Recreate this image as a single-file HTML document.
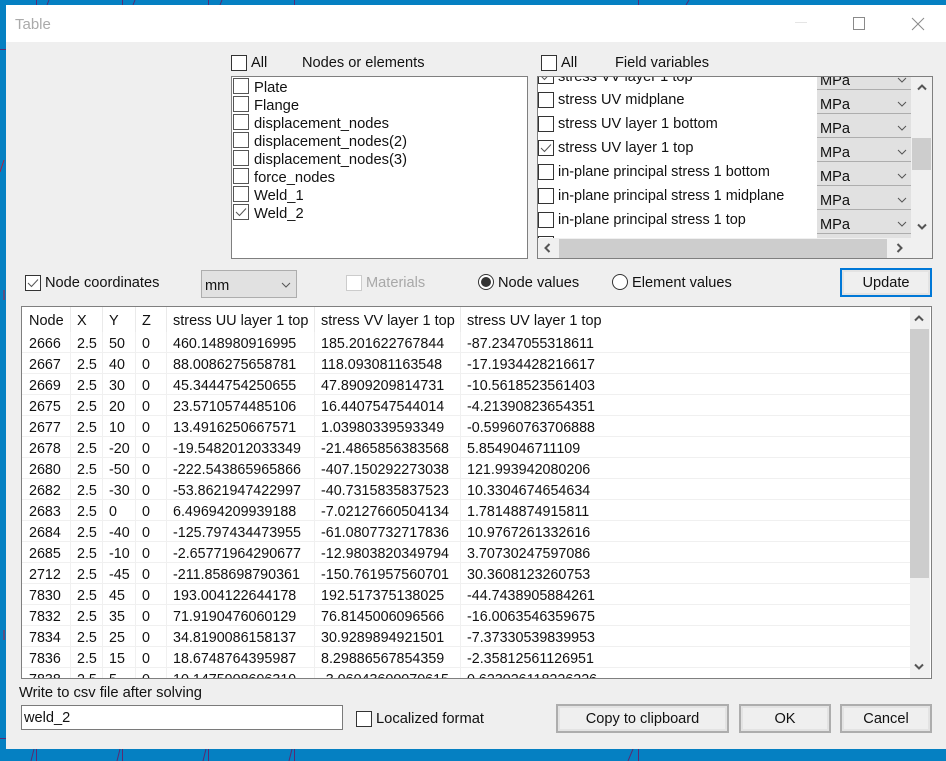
<!DOCTYPE html>
<html><head><meta charset="utf-8"><title>Table</title>
<style>
html,body{margin:0;padding:0;width:946px;height:761px;overflow:hidden;background:#0580c2;}
*{box-sizing:border-box;}
body{font-family:"Liberation Sans",Arial,sans-serif;font-size:14.6px;color:#111;position:relative;}
.a{position:absolute;}
.t{position:absolute;white-space:nowrap;line-height:18px;height:18px;margin-top:1px;}
.n{font-size:14.45px;}
.w{font-size:14.72px;}
.c{position:absolute;width:16px;height:16px;border:1px solid #333;background:#fff;}
.c svg{position:absolute;left:1px;top:1px;}
.box{position:absolute;background:#fff;border:1px solid #7f7f7f;overflow:hidden;}
.combo{position:absolute;left:279px;width:94px;height:24px;background:#e1e1e1;border-top:1px solid #adadad;}
.combo span{position:absolute;left:3px;top:6px;line-height:18px;}
.combo svg{position:absolute;left:80px;top:11px;}
.btn{position:absolute;height:29px;background:#efefef;border:2px solid #adadad;box-shadow:inset 0 0 0 2px #e3e3e3;text-align:center;line-height:26px;}
table{position:absolute;left:0;top:0;border-collapse:separate;border-spacing:0;table-layout:fixed;width:888px;font-size:14.3px;}
td,th{font-weight:normal;text-align:left;padding:5px 0 0 6px;white-space:nowrap;overflow:hidden;height:21px;line-height:15px;border-bottom:1px solid #f0f0f0;border-right:1px solid #f0f0f0;}
td:first-child,th:first-child{padding-left:7px;}
th{height:25px;line-height:21px;padding-top:4px;border-bottom:0;border-right:1px solid #eaeaea;font-size:14.5px;}
td:last-child,th:last-child{border-right:0;}
</style></head><body>
<svg class="a" style="left:0;top:0" width="946" height="761">
<g stroke="#5a2a72" stroke-width="1" fill="none">
<path d="M36.5 0V5M47 5L49 0M122.5 0V5M133 5L135 0M208.5 0V5M220 5L222 0M294.5 0V5M638.5 0V5M686 5L689 0"/>
<path d="M36.5 749V761M31 761L34 749M122.5 749V761M117 761L120 749M208.5 749V761M203 761L206 749M294.5 749V761M289 761L292 749M638.5 749V761M628 761L633 749"/>
<path d="M0 49.5H6M0 738.5H6"/>
</g>
<path d="M4 290V300M4 630V640M0 172L4 160" stroke="#b02040" fill="none"/>
</svg>

<div class="a" style="left:6px;top:5px;width:940px;height:744px;background:#efefef;"></div>
<div class="a" style="left:6px;top:5px;width:940px;height:37px;background:#fff;"></div>
<div class="t" style="left:15px;top:15px;color:#aaa;font-size:15px;">Table</div>
<div class="a" style="left:795px;top:22px;width:12px;height:1px;background:#e5e5e5;"></div>
<div class="a" style="left:853px;top:17px;width:12px;height:13px;border:1px solid #8a8a8a;"></div>
<svg class="a" style="left:911px;top:17px" width="14" height="14"><path d="M1 1L13 13M13 1L1 13" stroke="#8a8a8a" stroke-width="1" fill="none"/></svg>

<div class="c" style="left:231px;top:55px;"></div><div class="t" style="left:251px;top:53px;">All</div>
<div class="t" style="left:302px;top:53px;">Nodes or elements</div>
<div class="c" style="left:541px;top:55px;"></div><div class="t" style="left:561px;top:53px;">All</div>
<div class="t" style="left:615px;top:53px;">Field variables</div>

<!-- left list -->
<div class="box w" style="left:231px;top:76px;width:297px;height:183px;">
<div class="c" style="left:1px;top:1px;border-color:#555"></div><div class="t" style="left:22px;top:1px;">Plate</div>
<div class="c" style="left:1px;top:19px;border-color:#555"></div><div class="t" style="left:22px;top:19px;">Flange</div>
<div class="c" style="left:1px;top:37px;border-color:#555"></div><div class="t" style="left:22px;top:37px;">displacement_nodes</div>
<div class="c" style="left:1px;top:55px;border-color:#555"></div><div class="t" style="left:22px;top:55px;">displacement_nodes(2)</div>
<div class="c" style="left:1px;top:73px;border-color:#555"></div><div class="t" style="left:22px;top:73px;">displacement_nodes(3)</div>
<div class="c" style="left:1px;top:91px;border-color:#555"></div><div class="t" style="left:22px;top:91px;">force_nodes</div>
<div class="c" style="left:1px;top:109px;border-color:#555"></div><div class="t" style="left:22px;top:109px;">Weld_1</div>
<div class="c" style="left:1px;top:127px;border-color:#555"><svg width="12" height="12"><path d="M1 6L4.5 9.5L11 2.5" stroke="#555" fill="none"/></svg></div><div class="t" style="left:22px;top:127px;">Weld_2</div>
</div>

<!-- right list -->
<div class="box" style="left:537px;top:76px;width:396px;height:183px;">
<div class="c" style="left:0;top:-9px;"><svg width="12" height="12"><path d="M1 6L4.5 9.5L11 2.5" stroke="#555" fill="none"/></svg></div><div class="t" style="left:20px;top:-10px;">stress VV layer 1 top</div>
<div class="c" style="left:0;top:15px;"></div><div class="t" style="left:20px;top:13px;">stress UV midplane</div>
<div class="c" style="left:0;top:39px;"></div><div class="t" style="left:20px;top:37px;">stress UV layer 1 bottom</div>
<div class="c" style="left:0;top:63px;"><svg width="12" height="12"><path d="M1 6L4.5 9.5L11 2.5" stroke="#555" fill="none"/></svg></div><div class="t" style="left:20px;top:61px;">stress UV layer 1 top</div>
<div class="c" style="left:0;top:87px;"></div><div class="t n" style="left:20px;top:85px;">in-plane principal stress 1 bottom</div>
<div class="c" style="left:0;top:111px;"></div><div class="t n" style="left:20px;top:109px;">in-plane principal stress 1 midplane</div>
<div class="c" style="left:0;top:135px;"></div><div class="t n" style="left:20px;top:133px;">in-plane principal stress 1 top</div>
<div class="c" style="left:0;top:159px;"></div>
<div class="combo" style="top:-12px;"><span>MPa</span><svg width="10" height="6"><path d="M1 1L5 5L9 1" stroke="#555" fill="none"/></svg></div>
<div class="combo" style="top:12px;"><span>MPa</span><svg width="10" height="6"><path d="M1 1L5 5L9 1" stroke="#555" fill="none"/></svg></div>
<div class="combo" style="top:36px;"><span>MPa</span><svg width="10" height="6"><path d="M1 1L5 5L9 1" stroke="#555" fill="none"/></svg></div>
<div class="combo" style="top:60px;"><span>MPa</span><svg width="10" height="6"><path d="M1 1L5 5L9 1" stroke="#555" fill="none"/></svg></div>
<div class="combo" style="top:84px;"><span>MPa</span><svg width="10" height="6"><path d="M1 1L5 5L9 1" stroke="#555" fill="none"/></svg></div>
<div class="combo" style="top:108px;"><span>MPa</span><svg width="10" height="6"><path d="M1 1L5 5L9 1" stroke="#555" fill="none"/></svg></div>
<div class="combo" style="top:132px;"><span>MPa</span><svg width="10" height="6"><path d="M1 1L5 5L9 1" stroke="#555" fill="none"/></svg></div>
<div class="combo" style="top:156px;"></div>
<!-- v scrollbar -->
<div class="a" style="left:373px;top:0;width:21px;height:161px;background:#f0f0f0;"></div>
<div class="a" style="left:374px;top:61px;width:19px;height:32px;background:#cdcdcd;"></div>
<svg class="a" style="left:379px;top:7px" width="10" height="7"><path d="M1 5.5L5 1.5L9 5.5" stroke="#555" stroke-width="2" fill="none"/></svg>
<svg class="a" style="left:379px;top:146px" width="10" height="7"><path d="M1 1.5L5 5.5L9 1.5" stroke="#555" stroke-width="2" fill="none"/></svg>
<!-- h scrollbar -->
<div class="a" style="left:0;top:161px;width:394px;height:20px;background:#f0f0f0;"></div>
<div class="a" style="left:21px;top:162px;width:328px;height:19px;background:#cdcdcd;"></div>
<svg class="a" style="left:6px;top:166px" width="7" height="10"><path d="M5.5 1L1.5 5L5.5 9" stroke="#555" stroke-width="2" fill="none"/></svg>
<svg class="a" style="left:358px;top:166px" width="7" height="10"><path d="M1.5 1L5.5 5L1.5 9" stroke="#555" stroke-width="2" fill="none"/></svg>
</div>

<!-- options row -->
<div class="c" style="left:25px;top:275px;"><svg width="12" height="12"><path d="M1 6L4.5 9.5L11 2.5" stroke="#555" fill="none"/></svg></div>
<div class="t" style="left:45px;top:273px;">Node coordinates</div>
<div class="a" style="left:201px;top:270px;width:96px;height:28px;background:#e1e1e1;border:1px solid #adadad;"></div>
<div class="t" style="left:205px;top:276px;">mm</div>
<svg class="a" style="left:281px;top:282px" width="10" height="6"><path d="M1 1L5 5L9 1" stroke="#555" fill="none"/></svg>
<div class="c" style="left:346px;top:275px;border-color:#ccc;"></div>
<div class="t" style="left:366px;top:273px;color:#a8a8a8;">Materials</div>
<svg class="a" style="left:478px;top:274px" width="16" height="16"><circle cx="8" cy="8" r="7.5" fill="#fff" stroke="#333"/><circle cx="8" cy="8" r="5" fill="#333"/></svg>
<div class="t" style="left:498px;top:273px;">Node values</div>
<svg class="a" style="left:612px;top:274px" width="16" height="16"><circle cx="8" cy="8" r="7.5" fill="#fff" stroke="#333"/></svg>
<div class="t" style="left:632px;top:273px;">Element values</div>
<div class="btn" style="left:840px;top:268px;width:92px;border-color:#0078d7;">Update</div>

<!-- table -->
<div class="box" style="left:21px;top:306px;width:911px;height:373px;">
<table><colgroup><col style="width:49px"><col style="width:32px"><col style="width:33px"><col style="width:31px"><col style="width:148px"><col style="width:146px"><col></colgroup>
<tr><th>Node</th><th>X</th><th>Y</th><th>Z</th><th>stress UU layer 1 top</th><th>stress VV layer 1 top</th><th>stress UV layer 1 top</th></tr>
<tr><td>2666</td><td>2.5</td><td>50</td><td>0</td><td>460.148980916995</td><td>185.201622767844</td><td>-87.2347055318611</td></tr>
<tr><td>2667</td><td>2.5</td><td>40</td><td>0</td><td>88.0086275658781</td><td>118.093081163548</td><td>-17.1934428216617</td></tr>
<tr><td>2669</td><td>2.5</td><td>30</td><td>0</td><td>45.3444754250655</td><td>47.8909209814731</td><td>-10.5618523561403</td></tr>
<tr><td>2675</td><td>2.5</td><td>20</td><td>0</td><td>23.5710574485106</td><td>16.4407547544014</td><td>-4.21390823654351</td></tr>
<tr><td>2677</td><td>2.5</td><td>10</td><td>0</td><td>13.4916250667571</td><td>1.03980339593349</td><td>-0.59960763706888</td></tr>
<tr><td>2678</td><td>2.5</td><td>-20</td><td>0</td><td>-19.5482012033349</td><td>-21.4865856383568</td><td>5.8549046711109</td></tr>
<tr><td>2680</td><td>2.5</td><td>-50</td><td>0</td><td>-222.543865965866</td><td>-407.150292273038</td><td>121.993942080206</td></tr>
<tr><td>2682</td><td>2.5</td><td>-30</td><td>0</td><td>-53.8621947422997</td><td>-40.7315835837523</td><td>10.3304674654634</td></tr>
<tr><td>2683</td><td>2.5</td><td>0</td><td>0</td><td>6.49694209939188</td><td>-7.02127660504134</td><td>1.78148874915811</td></tr>
<tr><td>2684</td><td>2.5</td><td>-40</td><td>0</td><td>-125.797434473955</td><td>-61.0807732717836</td><td>10.9767261332616</td></tr>
<tr><td>2685</td><td>2.5</td><td>-10</td><td>0</td><td>-2.65771964290677</td><td>-12.9803820349794</td><td>3.70730247597086</td></tr>
<tr><td>2712</td><td>2.5</td><td>-45</td><td>0</td><td>-211.858698790361</td><td>-150.761957560701</td><td>30.3608123260753</td></tr>
<tr><td>7830</td><td>2.5</td><td>45</td><td>0</td><td>193.004122644178</td><td>192.517375138025</td><td>-44.7438905884261</td></tr>
<tr><td>7832</td><td>2.5</td><td>35</td><td>0</td><td>71.9190476060129</td><td>76.8145006096566</td><td>-16.0063546359675</td></tr>
<tr><td>7834</td><td>2.5</td><td>25</td><td>0</td><td>34.8190086158137</td><td>30.9289894921501</td><td>-7.37330539839953</td></tr>
<tr><td>7836</td><td>2.5</td><td>15</td><td>0</td><td>18.6748764395987</td><td>8.29886567854359</td><td>-2.35812561126951</td></tr>
<tr><td>7838</td><td>2.5</td><td>5</td><td>0</td><td>10.1475908696319</td><td>-3.06043600070615</td><td>0.623026118226226</td></tr>
</table>
<div class="a" style="left:888px;top:0;width:20px;height:371px;background:#f0f0f0;"></div>
<div class="a" style="left:888px;top:22px;width:19px;height:249px;background:#cdcdcd;"></div>
<svg class="a" style="left:892px;top:8px" width="10" height="7"><path d="M1 5.5L5 1.5L9 5.5" stroke="#555" stroke-width="2" fill="none"/></svg>
<svg class="a" style="left:892px;top:356px" width="10" height="7"><path d="M1 1.5L5 5.5L9 1.5" stroke="#555" stroke-width="2" fill="none"/></svg>
</div>

<!-- bottom -->
<div class="t w" style="left:19px;top:683px;">Write to csv file after solving</div>
<div class="a" style="left:21px;top:705px;width:322px;height:25px;background:#fff;border:1px solid #7a7a7a;"></div>
<div class="t" style="left:24px;top:708px;">weld_2</div>
<div class="c" style="left:356px;top:711px;"></div>
<div class="t w" style="left:376px;top:709px;">Localized format</div>
<div class="btn" style="left:556px;top:704px;width:173px;">Copy to clipboard</div>
<div class="btn" style="left:739px;top:704px;width:92px;">OK</div>
<div class="btn" style="left:840px;top:704px;width:92px;">Cancel</div>
</body></html>
